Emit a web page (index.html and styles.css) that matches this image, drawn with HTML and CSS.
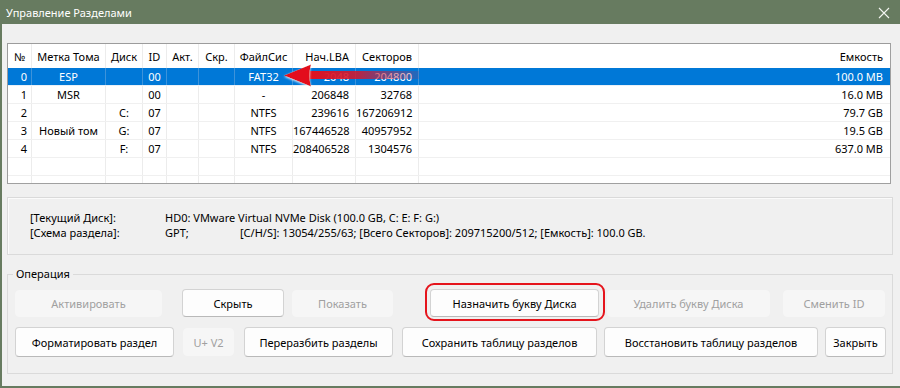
FILE: index.html
```html
<!DOCTYPE html>
<html lang="ru">
<head>
<meta charset="utf-8">
<title>Управление Разделами</title>
<link rel="stylesheet" href="styles.css">
</head>
<body>
<div class="window">
  <div class="titlebar">
    <span class="title">Управление Разделами</span>
    <svg class="close" width="12" height="12" viewBox="0 0 12 12"><path d="M1 1L11 11M11 1L1 11" stroke="#f4f6f2" stroke-width="1.1" fill="none"/></svg>
  </div>
  <div class="content">
    <div class="table">
      <div class="row head">
        <div class="c center">№</div>
        <div class="c center">Метка Тома</div>
        <div class="c center">Диск</div>
        <div class="c center">ID</div>
        <div class="c center">Акт.</div>
        <div class="c center">Скр.</div>
        <div class="c center">ФайлСис</div>
        <div class="c right">Нач.LBA</div>
        <div class="c right">Секторов</div>
        <div class="c right last">Емкость</div>
      </div>
      <div class="row sel">
        <div class="c right num">0</div>
        <div class="c center">ESP</div>
        <div class="c center"></div>
        <div class="c center">00</div>
        <div class="c"></div>
        <div class="c"></div>
        <div class="c center">FAT32</div>
        <div class="c right">2048</div>
        <div class="c right">204800</div>
        <div class="c right last">100.0 MB</div>
      </div>
      <div class="row">
        <div class="c right num">1</div>
        <div class="c center">MSR</div>
        <div class="c center"></div>
        <div class="c center">00</div>
        <div class="c"></div>
        <div class="c"></div>
        <div class="c center">-</div>
        <div class="c right">206848</div>
        <div class="c right">32768</div>
        <div class="c right last">16.0 MB</div>
      </div>
      <div class="row">
        <div class="c right num">2</div>
        <div class="c center"></div>
        <div class="c center">C:</div>
        <div class="c center">07</div>
        <div class="c"></div>
        <div class="c"></div>
        <div class="c center">NTFS</div>
        <div class="c right">239616</div>
        <div class="c right">167206912</div>
        <div class="c right last">79.7 GB</div>
      </div>
      <div class="row">
        <div class="c right num">3</div>
        <div class="c center">Новый том</div>
        <div class="c center">G:</div>
        <div class="c center">07</div>
        <div class="c"></div>
        <div class="c"></div>
        <div class="c center">NTFS</div>
        <div class="c right">167446528</div>
        <div class="c right">40957952</div>
        <div class="c right last">19.5 GB</div>
      </div>
      <div class="row">
        <div class="c right num">4</div>
        <div class="c center"></div>
        <div class="c center">F:</div>
        <div class="c center">07</div>
        <div class="c"></div>
        <div class="c"></div>
        <div class="c center">NTFS</div>
        <div class="c right">208406528</div>
        <div class="c right">1304576</div>
        <div class="c right last">637.0 MB</div>
      </div>
      <div class="row">
        <div class="c"></div><div class="c"></div><div class="c"></div><div class="c"></div><div class="c"></div>
        <div class="c"></div><div class="c"></div><div class="c"></div><div class="c"></div><div class="c last"></div>
      </div>
      <div class="row partial">
        <div class="c"></div><div class="c"></div><div class="c"></div><div class="c"></div><div class="c"></div>
        <div class="c"></div><div class="c"></div><div class="c"></div><div class="c"></div><div class="c last"></div>
      </div>
      <svg class="arrow" width="150" height="32" viewBox="0 0 150 32">
        <defs>
          <linearGradient id="shaft" x1="0" y1="0" x2="1" y2="0">
            <stop offset="0" stop-color="#e3101c" stop-opacity="1"/>
            <stop offset="0.45" stop-color="#d8162a" stop-opacity="0.85"/>
            <stop offset="1" stop-color="#c02040" stop-opacity="0.15"/>
          </linearGradient>
          <filter id="halo" x="-20%" y="-40%" width="140%" height="180%">
            <feDropShadow dx="0" dy="1" stdDeviation="0.8" flood-color="#ffffff" flood-opacity="0.9"/>
          </filter>
        </defs>
        <rect x="27" y="11" width="112" height="8" fill="url(#shaft)"/>
        <path d="M4 15.5 L31 4.5 Q28 15.5 31 26.5 Z" fill="#e3101c" filter="url(#halo)"/>
      </svg>
    </div>

    <div class="info">
      <span>[Текущий Диск]:</span>
      <span class="span2">HD0: VMware Virtual NVMe Disk (100.0 GB, C: E: F: G:)</span>
      <span>[Схема раздела]:</span>
      <span>GPT;</span>
      <span>[C/H/S]: 13054/255/63; [Всего Секторов]: 209715200/512; [Емкость]: 100.0 GB.</span>
    </div>

    <fieldset class="ops">
      <legend>Операция</legend>
      <div class="btnrow r1">
        <button class="btn dis w-act" disabled>Активировать</button>
        <button class="btn w-hide">Скрыть</button>
        <button class="btn dis w-show" disabled>Показать</button>
        <button class="btn w-assign marked">Назначить букву Диска</button>
        <button class="btn dis w-remove" disabled>Удалить букву Диска</button>
        <button class="btn dis w-id" disabled>Сменить ID</button>
      </div>
      <div class="btnrow r2">
        <button class="btn w-format">Форматировать раздел</button>
        <button class="btn dis w-uv" disabled>U+ V2</button>
        <button class="btn w-repart">Переразбить разделы</button>
        <button class="btn w-save">Сохранить таблицу разделов</button>
        <button class="btn w-restore">Восстановить таблицу разделов</button>
        <button class="btn w-close">Закрыть</button>
      </div>
    </fieldset>
  </div>
</div>
</body>
</html>
```

FILE: styles.css
```css
* { box-sizing: border-box; }
html, body { margin: 0; padding: 0; }
body {
  width: 900px;
  height: 388px;
  overflow: hidden;
  font-family: "Noto Sans", "Open Sans", sans-serif;
  font-size: 11px;
  color: #000;
}
.window {
  width: 900px;
  height: 388px;
  background: #677b60;
  display: flex;
  flex-direction: column;
}
.titlebar {
  height: 24px;
  flex: none;
  display: flex;
  align-items: center;
  justify-content: space-between;
  padding: 0 10px 0 6px;
  color: #ffffff;
}
.title { font-size: 11px; line-height: 16px; padding-top: 1px; }
.close { display: block; margin-top: 1px; }

.content {
  flex: 1;
  margin: 0 0 2px 2px;
  background: #f0f0f0;
  padding: 19px 7px 0 5px;
  display: flex;
  flex-direction: column;
}

.table {
  position: relative;
  width: 884px;
  height: 141px;
  border: 1px solid #a3a3a3;
  border-color: #9c9c9c #a0a0a0 #a0a0a0 #9c9c9c;
  background: #fff;
  overflow: hidden;
}
.row {
  display: grid;
  grid-template-columns: 24px 74px 37px 24px 32px 36px 58px 63px 63px 1fr;
  height: 18px;
  border-bottom: 1px solid #f0f0f0;
}
.row.head { height: 24px; border-bottom: none; }
.row.head .c { line-height: 24px; padding-top: 1px; }
.row.partial { height: 8px; border-bottom: none; }
.c {
  border-right: 1px solid #ececec;
  line-height: 17px;
  white-space: nowrap;
  overflow: hidden;
}
.c.last { border-right: none; }
.center { text-align: center; }
.right { text-align: right; padding-right: 6px; }
.num { padding-right: 4px; }
.c.last.right { padding-right: 7px; }
.row.sel { background: #0078d7; color: #fff; border-bottom-color: #e8f0f8; }
.row.sel .c { border-right-color: #3d93da; }

.arrow {
  position: absolute;
  left: 272px;
  top: 16px;
}

.info {
  margin-top: 13px;
  height: 58px;
  border: 1px solid #dadada;
  box-shadow: inset 1px 1px 0 #fbfbfb;
  display: grid;
  grid-template-columns: 135px 75px 1fr;
  grid-auto-rows: 15px;
  align-content: start;
  padding: 12px 0 0 22px;
  line-height: 15px;
}
.info span { line-height: 15px; white-space: nowrap; }
.info .span2 { grid-column: span 2; }

.ops {
  margin: 11px 0 0 0;
  padding: 0 0 0 7px;
  border: 1px solid #dadada;
  height: 108px;
  min-width: 0;
}
.ops legend {
  margin-left: -2px;
  padding: 0 3px;
  font-size: 11px;
  line-height: 16px;
}
.btnrow { display: flex; align-items: flex-start; }
.r1 { margin-top: 7px; height: 28px; }
.r2 { margin-top: 10px; height: 30px; }
.btn {
  font-family: inherit;
  font-size: 11px;
  color: #000;
  background: #fdfdfd;
  border: 1px solid #d3d3d3;
  border-bottom-color: #b9b9b9;
  border-radius: 4px;
  padding: 0;
  margin: 0;
  height: 100%;
  position: relative;
}
.btn.dis {
  background: #f6f6f6;
  border-color: #f6f6f6;
  color: #a0a0a0;
}
.r1 .btn.dis { height: 27px; margin-top: 1px; }
.r2 .btn.dis { height: 28px; margin-top: 1px; }
.w-act { width: 147px; }
.w-hide { width: 102px; margin-left: 20px; }
.w-show { width: 101px; margin-left: 8px; }
.w-assign { width: 169px; margin-left: 37px; }
.w-remove { width: 163px; margin-left: 8px; }
.w-id { width: 102px; margin-left: 13px; }
.w-format { width: 159px; }
.w-uv { width: 51px; margin-left: 9px; }
.w-repart { width: 149px; margin-left: 10px; }
.w-save { width: 195px; margin-left: 9px; }
.w-restore { width: 214px; margin-left: 7px; }
.w-close { width: 61px; margin-left: 7px; }
.marked::after {
  content: "";
  position: absolute;
  left: -6px;
  right: -7px;
  top: -7px;
  bottom: -5px;
  border: 2px solid #e5141c;
  border-radius: 9px;
}
```
